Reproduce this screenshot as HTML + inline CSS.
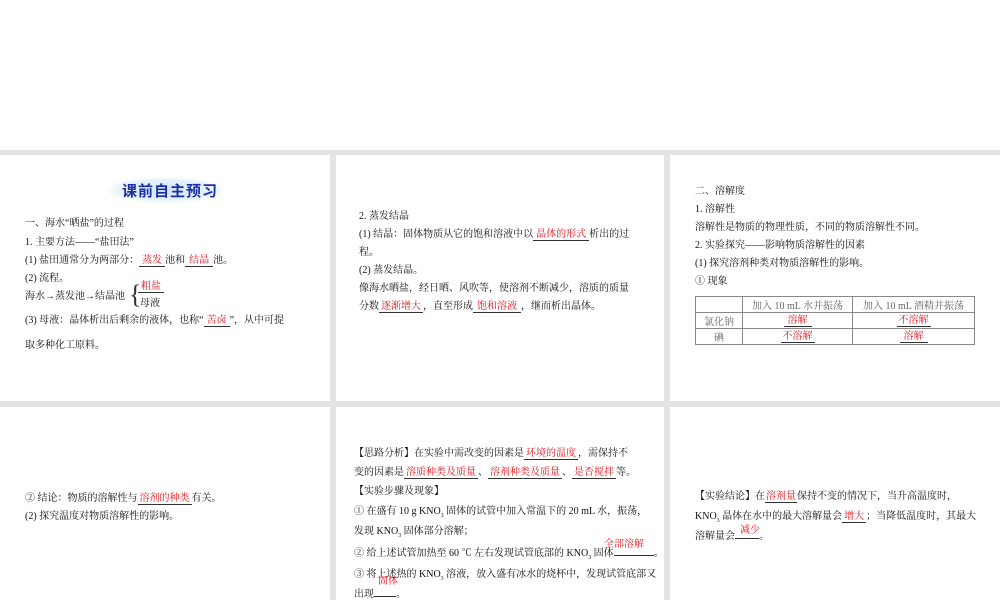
<!DOCTYPE html>
<html><head><meta charset="utf-8"><style>
body{margin:0;width:1000px;height:600px;position:relative;background:#fff;overflow:hidden;font-family:"Liberation Serif","Noto Serif CJK SC","Noto Sans CJK SC",serif;font-size:10px;color:#111}
.bg{position:absolute;left:0;top:150px;width:1000px;height:450px;background:#e4e4e4}
.p{position:absolute;background:#fff}
.t{position:absolute;white-space:nowrap;line-height:12px}
.r{color:#e0141e}
.u{display:inline-block;border-bottom:1px solid #333;text-align:center;color:#e0141e;line-height:11px}
sub{font-size:6px;line-height:0}
table{position:absolute;border-collapse:collapse;font-size:10px;color:#666}
td{border:1px solid #888;height:14px;text-align:center;padding:0}
.h{position:absolute;left:108px;top:177px;width:115px;height:26px;background:radial-gradient(ellipse at center,#cfe6f8 0%,#e6f2fb 55%,#fff 75%);}
.ht{position:absolute;left:122px;top:180px;font-family:"Noto Sans CJK SC",sans-serif;font-weight:bold;font-size:15px;color:#1d2fa6;letter-spacing:1px}
</style></head><body>
<div class="bg"></div>
<div class="p" style="left:0;top:155px;width:330px;height:246px"></div>
<div class="p" style="left:336px;top:155px;width:328px;height:246px"></div>
<div class="p" style="left:670px;top:155px;width:330px;height:246px"></div>
<div class="p" style="left:0;top:407px;width:330px;height:193px"></div>
<div class="p" style="left:336px;top:407px;width:328px;height:193px"></div>
<div class="p" style="left:670px;top:407px;width:330px;height:193px"></div>

<div class="h"></div><div class="ht">课前自主预习</div>
<div class="t" style="left:25px;top:218px">一、海水“晒盐”的过程</div>
<div class="t" style="left:25px;top:237px">1. 主要方法——“盐田法”</div>
<div class="t" style="left:25px;top:255px">(1) 盐田通常分为两部分：<span class="u" style="width:26px">蒸发</span>池和<span class="u" style="width:28px">结晶</span>池。</div>
<div class="t" style="left:25px;top:273px">(2) 流程。</div>
<div class="t" style="left:25px;top:291px">海水→蒸发池→结晶池</div>
<div class="t" style="left:129px;top:280px;font-size:26px;line-height:30px;color:#333;font-weight:100">{</div>
<div class="t" style="left:138px;top:281px"><span class="u" style="width:26px">粗盐</span></div>
<div class="t" style="left:140px;top:298px">母液</div>
<div class="t" style="left:25px;top:315px">(3) 母液：晶体析出后剩余的液体，也称“<span class="u" style="width:26px">苦卤</span>”，从中可提</div>
<div class="t" style="left:25px;top:340px">取多种化工原料。</div>

<div class="t" style="left:359px;top:211px">2. 蒸发结晶</div>
<div class="t" style="left:359px;top:229px">(1) 结晶：固体物质从它的饱和溶液中以<span class="u" style="width:56px">晶体的形式</span>析出的过</div>
<div class="t" style="left:359px;top:247px">程。</div>
<div class="t" style="left:359px;top:265px">(2) 蒸发结晶。</div>
<div class="t" style="left:359px;top:283px">像海水晒盐，经日晒、风吹等，使溶剂不断减少，溶质的质量</div>
<div class="t" style="left:359px;top:301px">分数<span class="u" style="width:44px">逐渐增大</span>，直至形成<span class="u" style="width:48px">饱和溶液</span>，继而析出晶体。</div>

<div class="t" style="left:695px;top:186px">二、溶解度</div>
<div class="t" style="left:695px;top:204px">1. 溶解性</div>
<div class="t" style="left:695px;top:222px">溶解性是物质的物理性质，不同的物质溶解性不同。</div>
<div class="t" style="left:695px;top:240px">2. 实验探究——影响物质溶解性的因素</div>
<div class="t" style="left:695px;top:258px">(1) 探究溶剂种类对物质溶解性的影响。</div>
<div class="t" style="left:695px;top:276px">① 现象</div>
<table style="left:695px;top:296px;width:280px">
<tr><td style="width:46px"></td><td>加入 10 mL 水并振荡</td><td>加入 10 mL 酒精并振荡</td></tr>
<tr><td>氯化钠</td><td><span class="u" style="width:28px">溶解</span></td><td><span class="u" style="width:34px">不溶解</span></td></tr>
<tr><td>碘</td><td><span class="u" style="width:34px">不溶解</span></td><td><span class="u" style="width:28px">溶解</span></td></tr>
</table>

<div class="t" style="left:25px;top:493px">② 结论：物质的溶解性与<span class="u" style="width:54px">溶剂的种类</span>有关。</div>
<div class="t" style="left:25px;top:511px">(2) 探究温度对物质溶解性的影响。</div>

<div class="t" style="left:354px;top:448px">【思路分析】在实验中需改变的因素是<span class="u" style="width:54px">环境的温度</span>，需保持不</div>
<div class="t" style="left:354px;top:467px">变的因素是<span class="u" style="width:74px">溶质种类及质量</span>、<span class="u" style="width:74px">溶剂种类及质量</span>、<span class="u" style="width:44px">是否搅拌</span>等。</div>
<div class="t" style="left:354px;top:486px">【实验步骤及现象】</div>
<div class="t" style="left:354px;top:506px">① 在盛有 10 g KNO<sub>3</sub> 固体的试管中加入常温下的 20 mL 水，振荡，</div>
<div class="t" style="left:354px;top:526px">发现 KNO<sub>3</sub> 固体部分溶解；</div>
<div class="t r" style="left:604px;top:539px">全部溶解</div>
<div class="t" style="left:354px;top:548px">② 给上述试管加热至 60 ℃ 左右发现试管底部的 KNO<sub>3</sub> 固体<span style="display:inline-block;width:40px;border-bottom:1px solid #333"></span>。</div>
<div class="t" style="left:354px;top:569px">③ 将上述热的 KNO<sub>3</sub> 溶液，放入盛有冰水的烧杯中，发现试管底部又</div>
<div class="t r" style="left:378px;top:576px">固体</div>
<div class="t" style="left:354px;top:589px">出现<span style="display:inline-block;width:22px;border-bottom:1px solid #333"></span>。</div>

<div class="t" style="left:695px;top:491px">【实验结论】在<span class="u" style="width:32px">溶剂量</span>保持不变的情况下，当升高温度时，</div>
<div class="t" style="left:695px;top:511px">KNO<sub>3</sub> 晶体在水中的最大溶解量会<span class="u" style="width:24px">增大</span>；当降低温度时，其最大</div>
<div class="t r" style="left:740px;top:525px">减少</div>
<div class="t" style="left:695px;top:531px">溶解量会<span style="display:inline-block;width:24px;border-bottom:1px solid #333"></span>。</div>
</body></html>
